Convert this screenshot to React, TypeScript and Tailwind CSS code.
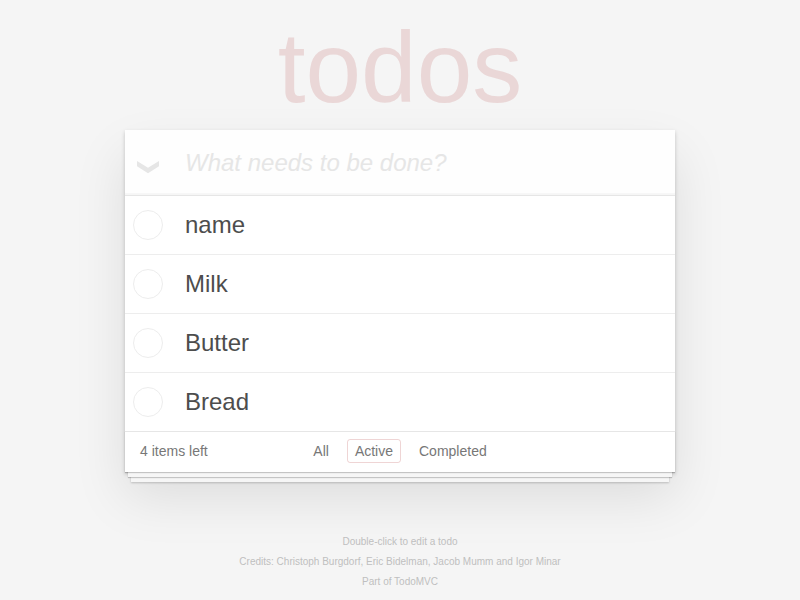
import { useState } from "react";

const initialTodos = ["name", "Milk", "Butter", "Bread"];
const filters = ["All", "Active", "Completed"];

export default function App() {
  const [todos, setTodos] = useState(initialTodos.map((title) => ({ title, done: false })));
  const [filter, setFilter] = useState("Active");
  const [draft, setDraft] = useState("");
  const left = todos.filter((t) => !t.done).length;

  return (
    <div className="min-h-screen bg-[#f5f5f5] font-['Liberation_Sans',Arial,sans-serif] text-sm leading-5 text-[#4d4d4d] antialiased">
      <div className="mx-auto max-w-[550px]">
        <h1 className="h-[130px] pt-[10px] text-center text-[100px] leading-[115px] font-thin text-[#af2f2f]/15">todos</h1>
        <section className="bg-white shadow-[0_2px_4px_0_rgba(0,0,0,0.2),0_25px_50px_0_rgba(0,0,0,0.1)]">
          <header className="flex h-[65px] items-center bg-black/[0.003] shadow-[inset_0_-2px_1px_rgba(0,0,0,0.03)]">
            <button
              type="button"
              aria-label="Mark all as complete"
              className="flex w-[60px] shrink-0 pt-[10px] pl-3 text-[#e6e6e6]"
              onClick={() => setTodos(todos.map((t) => ({ ...t, done: left > 0 })))}
            >
              <svg width="22" height="13" viewBox="0 0 22 13" fill="currentColor" aria-hidden="true">
                <path d="M0 0 11 6.7 22 0V5.2L11 12.3 0 5.2Z" />
              </svg>
            </button>
            <input
              aria-label="New todo"
              className="min-w-0 flex-1 bg-transparent text-2xl leading-[33px] outline-none placeholder:text-[#e6e6e6] placeholder:italic"
              placeholder="What needs to be done?"
              value={draft}
              onChange={(e) => setDraft(e.target.value)}
              onKeyDown={(e) => {
                if (e.key === "Enter" && draft.trim()) {
                  setTodos([...todos, { title: draft.trim(), done: false }]);
                  setDraft("");
                }
              }}
            />
          </header>
          <ul className="divide-y divide-[#ededed] border-t border-[#e6e6e6]">
            {todos.map((todo, i) => (
              <li key={i} className="text-2xl">
                <label className="flex items-start gap-[22px] py-[14px] pl-2 leading-[29px]">
                  <input
                    type="checkbox"
                    checked={todo.done}
                    onChange={() => setTodos(todos.map((t, j) => (j === i ? { ...t, done: !t.done } : t)))}
                    className="size-[30px] shrink-0 appearance-none rounded-full border border-[#ededed] checked:border-[#bddad5]"
                  />
                  {todo.title}
                </label>
              </li>
            ))}
          </ul>
          <footer className="flex h-[41px] items-center border-t border-[#e6e6e6] px-[15px] pb-[2px] text-[#777] shadow-[0_1px_1px_rgba(0,0,0,0.2),0_8px_0_-3px_#f6f6f6,0_9px_1px_-3px_rgba(0,0,0,0.2),0_16px_0_-6px_#f6f6f6,0_17px_2px_-6px_rgba(0,0,0,0.2)]">
            <span className="flex-1">{left} items left</span>
            <nav className="flex gap-[10px]">
              {filters.map((name) => (
                <a
                  key={name}
                  href="#"
                  onClick={() => setFilter(name)}
                  className={`rounded-[3px] border px-[7px] py-px ${name === filter ? "border-[#af2f2f]/20" : "border-transparent"}`}
                >
                  {name}
                </a>
              ))}
            </nav>
            <span className="flex-1" />
          </footer>
        </section>
        <footer className="mt-[65px] space-y-[10px] text-center text-[10px] leading-[10px] text-[#bfbfbf]">
          <p>Double-click to edit a todo</p>
          <p>
            Credits: <a href="#">Christoph Burgdorf</a>, <a href="#">Eric Bidelman</a>, <a href="#">Jacob Mumm</a> and{" "}
            <a href="#">Igor Minar</a>
          </p>
          <p>
            Part of <a href="#">TodoMVC</a>
          </p>
        </footer>
      </div>
    </div>
  );
}
